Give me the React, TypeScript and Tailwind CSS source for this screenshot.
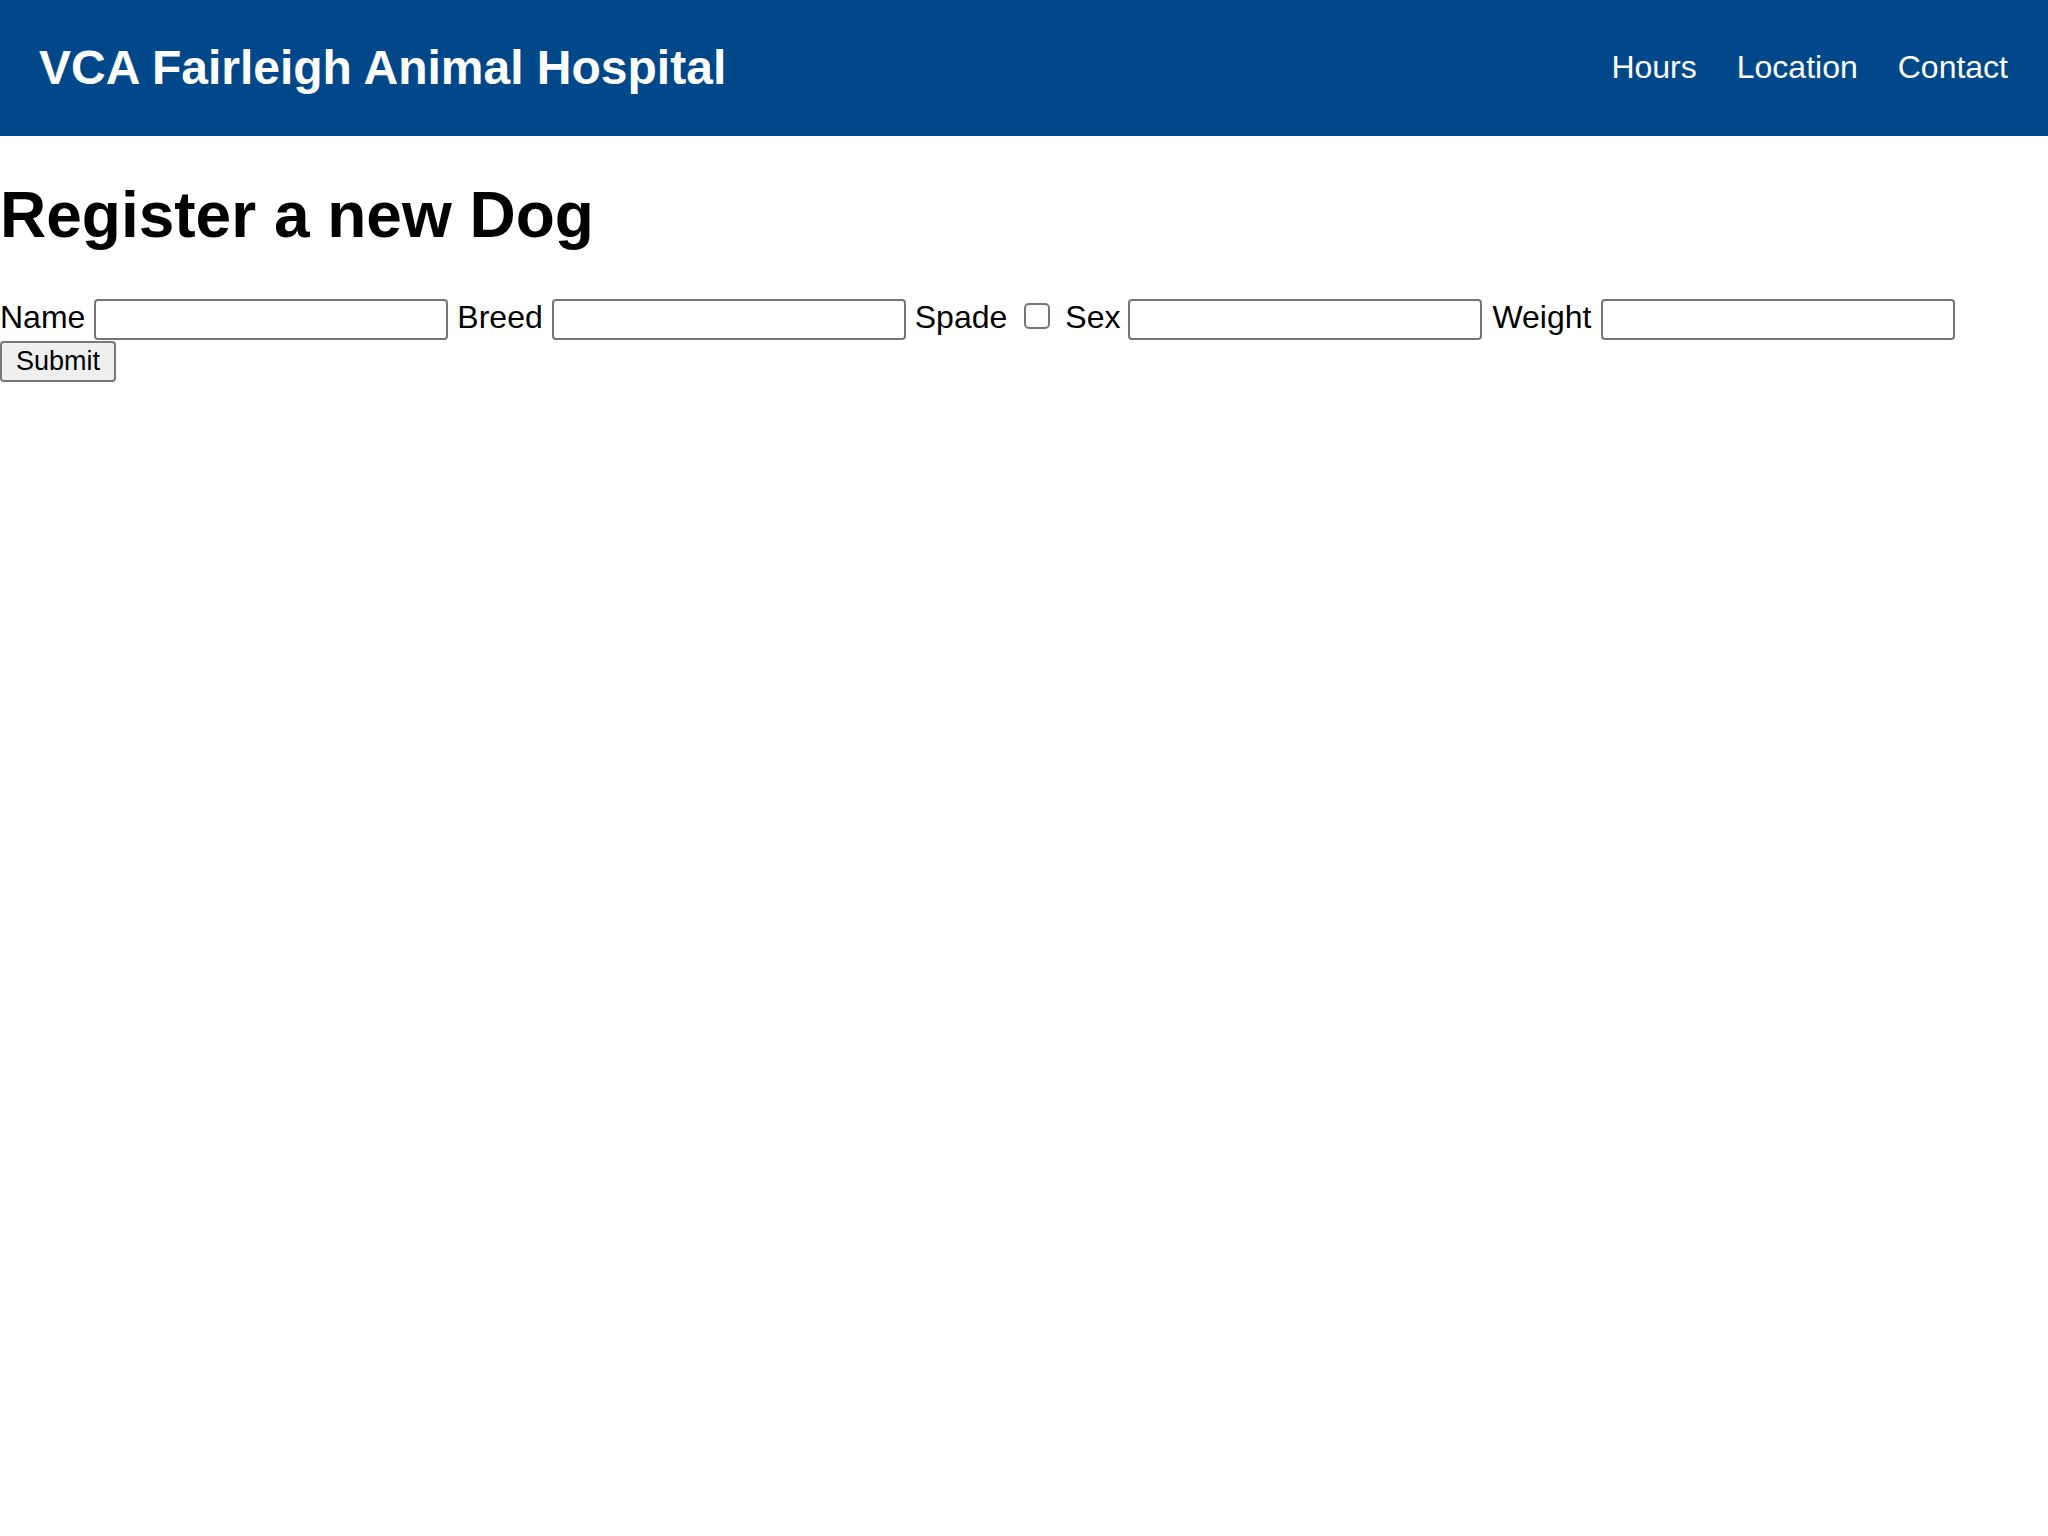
import React from 'react';

const navLinks = ['Hours', 'Location', 'Contact'];

const inputCls =
    'inline-block h-[41px] w-[354px] rounded-[4px] border-2 border-[#767676] bg-white px-[4px] text-[27px] outline-none';

export default function App() {
    return (
        <div className="min-h-screen bg-white font-['Liberation_Sans',Arial,sans-serif] text-black">
            <header className="flex h-[136px] items-center justify-between bg-[#01488b] pl-[39px] pr-[40px] text-white">
                <h2 className="text-[48px] font-bold leading-none">VCA Fairleigh Animal Hospital</h2>
                <nav className="mb-[2px] flex gap-[40px] text-[32px] leading-none">
                    {navLinks.map((l) => (
                        <a key={l} href="#">
                            {l}
                        </a>
                    ))}
                </nav>
            </header>

            <h1 className="mt-[43px] mb-[48px] text-[64px] font-bold leading-[72px]">Register a new Dog</h1>

            <form className="text-[32px]" onSubmit={(e) => e.preventDefault()}>
                <div className="flex h-[41px] items-center whitespace-nowrap">
                    <label className="mb-[5px]">Name</label>
                    <input type="text" className={`ml-[9px] ${inputCls}`} />
                    <label className="mb-[5px] ml-[9px]">Breed</label>
                    <input type="text" className={`ml-[9px] ${inputCls}`} />
                    <label className="mb-[5px] ml-[9px]">Spade</label>
                    <input
                        type="checkbox"
                        className="mb-[8px] ml-[17px] mr-[6px] h-[26px] w-[26px] appearance-none rounded-[5px] border-2 border-[#767676] bg-white"
                    />
                    <label className="mb-[5px] ml-[9px]">Sex</label>
                    <input type="text" className={`ml-[8px] ${inputCls}`} />
                    <label className="mb-[5px] ml-[10px]">Weight</label>
                    <input type="text" className={`ml-[10px] ${inputCls}`} />
                </div>
                <button
                    type="submit"
                    className="mt-[1px] block h-[41px] rounded-[4px] border-2 border-[#767676] bg-[#efefef] px-[14px] text-[27px] leading-none"
                >
                    Submit
                </button>
            </form>
        </div>
    );
}
